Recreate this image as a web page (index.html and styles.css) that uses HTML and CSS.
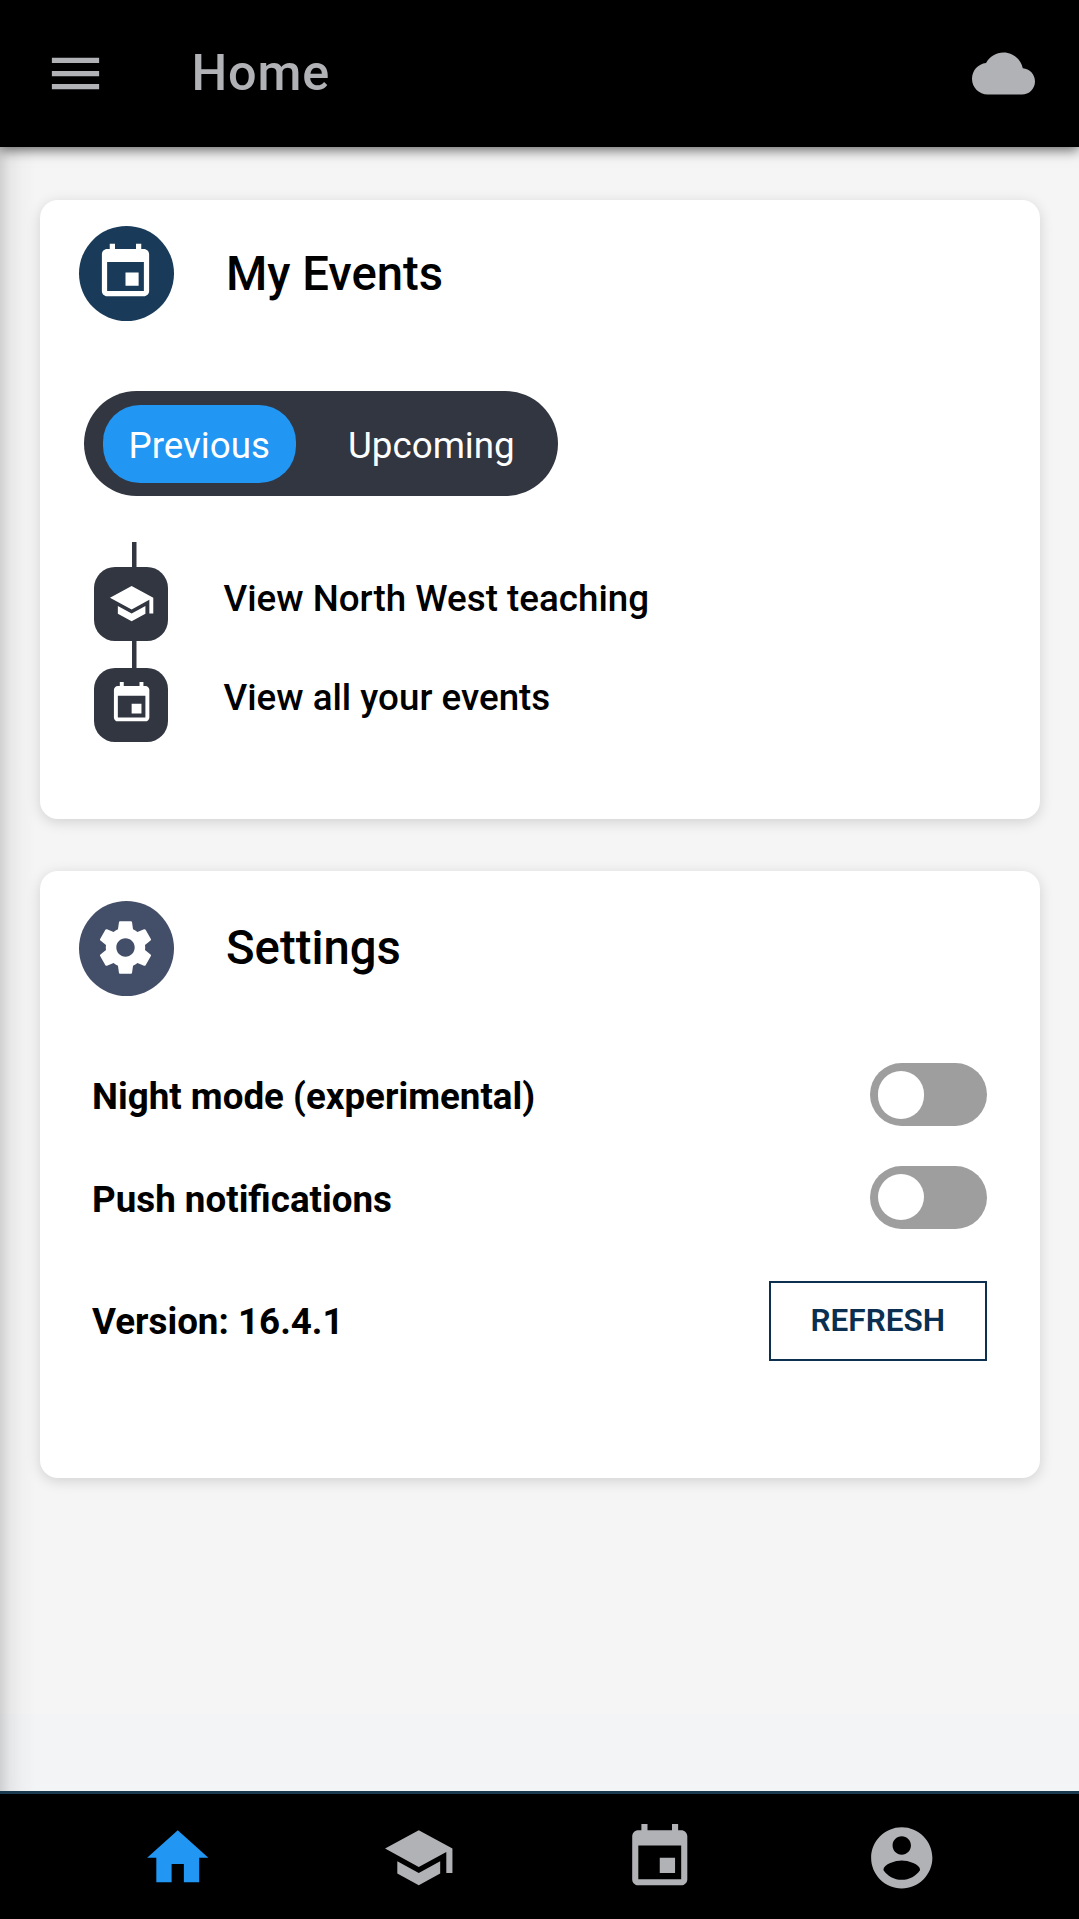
FILE: index.html
```html
<!DOCTYPE html>
<html lang="en">
<head>
<meta charset="utf-8">
<title>Home</title>
<link rel="stylesheet" href="styles.css">
</head>
<body>
<svg class="defs" width="0" height="0" aria-hidden="true">
  <symbol id="event" viewBox="0 0 24 24"><path d="M17 12h-5v5h5v-5zM16 1v2H8V1H6v2H5c-1.11 0-1.99.9-1.99 2L3 19c0 1.1.89 2 2 2h14c1.1 0 2-.9 2-2V5c0-1.1-.9-2-2-2h-1V1h-2zm3 18H5V8h14v11z"/></symbol>
  <symbol id="school" viewBox="0 0 24 24"><path d="M5 13.18v4L12 21l7-3.82v-4L12 17l-7-3.82zM12 3L1 9l11 6 9-4.91V17h2V9L12 3z"/></symbol>
</svg>
<div class="app">
  <header class="topbar">
    <svg class="icon" viewBox="0 0 24 24"><path d="M3 18h18v-2H3v2zm0-5h18v-2H3v2zm0-7v2h18V6H3z"/></svg>
    <h1 class="topbar-title">Home</h1>
    <svg class="icon" viewBox="0 0 24 24"><path d="M19.35 10.04C18.67 6.59 15.64 4 12 4 9.11 4 6.6 5.64 5.35 8.04 2.34 8.36 0 10.91 0 14c0 3.31 2.69 6 6 6h13c2.76 0 5-2.24 5-5 0-2.64-2.05-4.78-4.65-4.96z"/></svg>
  </header>

  <main class="content">
    <section class="card events">
      <div class="card-head">
        <span class="badge badge-events"><svg class="icon" viewBox="0 0 24 24"><use href="#event"/></svg></span>
        <h2>My Events</h2>
      </div>
      <div class="segment">
        <button class="segment-item active">Previous</button>
        <button class="segment-item">Upcoming</button>
      </div>
      <ul class="timeline">
        <li><span class="node"><svg class="icon" viewBox="0 0 24 24"><use href="#school"/></svg></span><span class="label">View North West teaching</span></li>
        <li><span class="node"><svg class="icon" viewBox="0 0 24 24"><use href="#event"/></svg></span><span class="label">View all your events</span></li>
      </ul>
    </section>

    <section class="card settings">
      <div class="card-head">
        <span class="badge badge-settings"><svg class="icon" viewBox="0 0 24 24"><path d="M19.43 12.98c.04-.32.07-.64.07-.98s-.03-.66-.07-.98l2.11-1.65c.19-.15.24-.42.12-.64l-2-3.46c-.12-.22-.39-.3-.61-.22l-2.49 1c-.52-.4-1.08-.73-1.69-.98l-.38-2.65C14.46 2.18 14.25 2 14 2h-4c-.25 0-.46.18-.49.42l-.38 2.65c-.61.25-1.17.59-1.69.98l-2.49-1c-.23-.09-.49 0-.61.22l-2 3.46c-.13.22-.07.49.12.64l2.11 1.65c-.04.32-.07.65-.07.98s.03.66.07.98l-2.11 1.65c-.19.15-.24.42-.12.64l2 3.46c.12.22.39.3.61.22l2.49-1c.52.4 1.08.73 1.69.98l.38 2.65c.03.24.24.42.49.42h4c.25 0 .46-.18.49-.42l.38-2.65c.61-.25 1.17-.59 1.69-.98l2.49 1c.23.09.49 0 .61-.22l2-3.46c.12-.22.07-.49-.12-.64l-2.11-1.65zM12 15.5c-1.93 0-3.5-1.57-3.5-3.5s1.57-3.5 3.5-3.5 3.5 1.57 3.5 3.5-1.57 3.5-3.5 3.5z"/></svg></span>
        <h2>Settings</h2>
      </div>
      <div class="row row-night"><span>Night mode (experimental)</span><span class="switch"><span class="knob"></span></span></div>
      <div class="row row-push"><span>Push notifications</span><span class="switch"><span class="knob"></span></span></div>
      <div class="row row-version"><span>Version: 16.4.1</span><button class="refresh">REFRESH</button></div>
    </section>
  </main>

  <nav class="tabs">
    <a class="tab active"><svg class="icon" viewBox="0 0 24 24"><path d="M10 20v-6h4v6h5v-8h3L12 3 2 12h3v8z"/></svg></a>
    <a class="tab"><svg class="icon" viewBox="0 0 24 24"><use href="#school"/></svg></a>
    <a class="tab"><svg class="icon" viewBox="0 0 24 24"><use href="#event"/></svg></a>
    <a class="tab"><svg class="icon" viewBox="0 0 24 24"><path d="M12 2C6.48 2 2 6.48 2 12s4.48 10 10 10 10-4.48 10-10S17.52 2 12 2zm0 3c1.66 0 3 1.34 3 3s-1.34 3-3 3-3-1.34-3-3 1.34-3 3-3zm0 14.2c-2.5 0-4.71-1.28-6-3.22.03-1.99 4-3.08 6-3.08 1.99 0 5.97 1.09 6 3.08-1.29 1.94-3.5 3.22-6 3.22z"/></svg></a>
  </nav>
</div>
</body>
</html>
```
FILE: styles.css
```css
* { box-sizing: border-box; margin: 0; padding: 0; }

body {
  font-family: Roboto, "Liberation Sans", sans-serif;
  color: #000;
}

.defs { position: absolute; }

.app {
  display: flex;
  flex-direction: column;
  height: 1919px;
  overflow: hidden;
}

.icon {
  display: block;
  width: 63px;
  height: 63px;
  fill: currentColor;
  flex: none;
}

/* Top bar */
.topbar {
  position: relative;
  z-index: 2;
  display: flex;
  align-items: center;
  height: 147px;
  padding: 0 44px;
  background: #000;
  color: #b1b2b6;
  box-shadow: 0 3px 12px rgba(0, 0, 0, .6);
}

.topbar-title {
  flex: 1;
  padding: 0 0 2px 84.5px;
  font-size: 50.4px;
  font-weight: 500;
  letter-spacing: .8px;
}

/* Scroll area */
.content {
  flex: 1;
  display: flex;
  flex-direction: column;
  gap: 52px;
  padding: 52.5px 39.5px 0 40px;
  background:
    linear-gradient(to right, rgba(0, 0, 0, .15), rgba(0, 0, 0, .06) 10px, rgba(0, 0, 0, .02) 22px, transparent 36px),
    linear-gradient(to bottom, #f5f5f5 1567px, #f3f4f6 1567px);
}

.card {
  display: flex;
  flex-direction: column;
  border-radius: 18px;
  background: #fff;
  box-shadow: 0 3px 14px rgba(0, 0, 0, .15);
}

.events { height: 619.5px; padding: 26.5px 39px 0; }
.settings { height: 607px; padding: 29.5px 52.5px 0 39px; }

.card-head { display: flex; align-items: center; gap: 52px; height: 95px; }

.card-head h2 { font-size: 47.25px; font-weight: 500; }

.badge {
  display: flex;
  align-items: center;
  justify-content: center;
  width: 95px;
  height: 95px;
  padding: 0 2px 2px 0;
  border-radius: 50%;
  color: #fff;
}

.badge-events { background: #193b59; }
.badge-settings { background: #434e68; }

.segment {
  display: flex;
  align-items: center;
  align-self: flex-start;
  width: 474px;
  height: 105px;
  margin: 70px 0 0 5px;
  padding: 1px 18.5px 0;
  border-radius: 52.5px;
  background: #323641;
}

.segment-item {
  height: 78px;
  padding: 2px 26px 0;
  border: 0;
  border-radius: 37px;
  background: none;
  color: #fff;
  font: 400 36.75px Roboto, sans-serif;
}

.segment-item + .segment-item { margin-left: 26px; }
.segment-item.active { background: #2196f3; }

.timeline {
  align-self: flex-start;
  display: flex;
  flex-direction: column;
  gap: 27px;
  height: 200px;
  margin: 46px 0 0 15px;
  padding-top: 25px;
  list-style: none;
  background: linear-gradient(#323641, #323641) 38px 0 / 4.5px 199px no-repeat;
}

.timeline li { display: flex; align-items: center; gap: 56px; height: 74px; }

.node {
  display: flex;
  align-items: center;
  justify-content: center;
  width: 73.5px;
  height: 73.5px;
  padding-left: 2px;
  border-radius: 21px;
  background: #323641;
  color: #fff;
}

.node .icon { width: 47.25px; height: 47.25px; }

.label { padding-bottom: 11px; font-size: 36.75px; font-weight: 500; }
.timeline li + li .label { padding-bottom: 15px; }
.timeline li + li .node { padding-bottom: 2px; }

/* Settings */
.row {
  display: flex;
  align-items: center;
  justify-content: space-between;
  padding-left: 13px;
  font-size: 36.75px;
  font-weight: 700;
}

.row-night { height: 63px; margin-top: 67.5px; }
.row-push { height: 63px; margin-top: 39.5px; }
.row-version { height: 80px; margin-top: 52.5px; }

.row > span:first-child { padding-top: 4px; }
.row-version > span:first-child { padding-top: 1px; }

.switch {
  display: flex;
  align-items: center;
  width: 117.5px;
  height: 63px;
  padding-left: 8.5px;
  border-radius: 31.5px;
  background: #9e9e9e;
}

.knob { width: 46px; height: 46px; border-radius: 23px; background: #fff; }
.row-night .knob { height: 48px; }

.refresh {
  width: 218.5px;
  height: 80px;
  padding-bottom: 2px;
  border: 2px solid #0d3050;
  background: #fff;
  color: #0a2f51;
  font: 600 31.5px Roboto, sans-serif;
}

/* Bottom tabs */
.tabs {
  position: relative;
  z-index: 2;
  display: flex;
  height: 128px;
  padding: 26.5px 57px 0;
  border-top: 3px solid #1a3a4f;
  background: #000;
  color: #b1b2b6;
}

.tab { flex: 1; display: flex; justify-content: center; }
.tab .icon { width: 73.5px; height: 73.5px; }
.tab.active { color: #2196f3; }
```
